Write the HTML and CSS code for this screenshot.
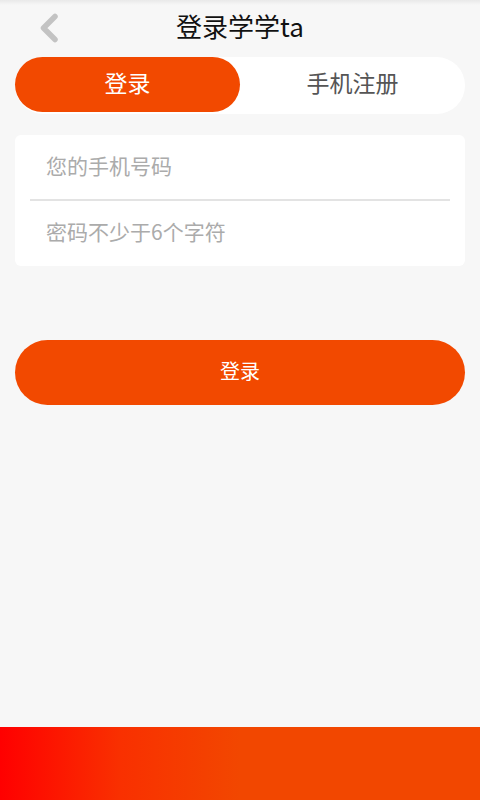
FILE: index.html
```html
<!DOCTYPE html>
<html lang="zh-CN">
<head>
<meta charset="utf-8">
<title>登录学学ta</title>
<link rel="stylesheet" href="styles.css">
</head>
<body>
<div class="page">
  <header class="header">
    <span class="back">
      <svg width="24" height="32" viewBox="0 0 24 32"><path d="M18 4.5 L6.5 16 L18 27.5" fill="none" stroke="#c3c3c3" stroke-width="5.5" stroke-linecap="round" stroke-linejoin="round"/></svg>
    </span>
    <h1 class="title">登录学学ta</h1>
  </header>
  <nav class="tabs">
    <div class="tab active">登录</div>
    <div class="tab">手机注册</div>
  </nav>
  <form class="card">
    <div class="row"><input class="field" type="tel" placeholder="您的手机号码"></div>
    <div class="divider"></div>
    <div class="row"><input class="field" type="password" placeholder="密码不少于6个字符"></div>
  </form>
  <button class="submit" type="button">登录</button>
  <footer class="bottom"></footer>
</div>
</body>
</html>
```

FILE: styles.css
```css
html, body {
  margin: 0;
  padding: 0;
}
body {
  background: #f7f7f7;
  font-family: "Noto Sans CJK SC", "Noto Sans", sans-serif;
}
.page {
  height: 800px;
  display: flex;
  flex-direction: column;
  background: linear-gradient(#e9e9e9, #f7f7f7 5px, #f7f7f7);
}
.header {
  height: 57px;
  display: flex;
  align-items: center;
  justify-content: center;
  position: relative;
}
.back {
  position: absolute;
  left: 37px;
  top: 12px;
  display: flex;
}
.title {
  margin: 0;
  font-size: 26px;
  font-weight: normal;
  color: #111;
  line-height: 1;
  padding-bottom: 5px;
}
.tabs {
  margin: 0 15px;
  height: 57px;
  background: #fff;
  border-radius: 29px;
  display: flex;
}
.tab {
  flex: 1;
  display: flex;
  align-items: center;
  justify-content: center;
  font-size: 23px;
  color: #555;
  height: 55px;
  padding-bottom: 5px;
  box-sizing: border-box;
}
.tab.active {
  flex: 0 0 225px;
  background: #f24900;
  color: #fff;
  border-radius: 28px;
}
.card {
  margin: 21px 15px 0;
  background: #fff;
  border-radius: 6px;
  display: flex;
  flex-direction: column;
}
.row {
  height: 64px;
  display: flex;
  align-items: center;
  padding: 0 31px 5px;
  box-sizing: border-box;
}
.row:last-child {
  height: 65px;
}
.divider {
  height: 2px;
  margin: 0 15px;
  background: #e3e3e3;
}
.field {
  border: 0;
  outline: 0;
  background: transparent;
  font-family: inherit;
  font-size: 21px;
  padding: 0;
  width: 100%;
  color: #333;
}
.field::placeholder {
  color: #ababab;
}
.submit {
  margin: 74px 15px 0;
  height: 65px;
  border: 0;
  border-radius: 33px;
  background: #f24900;
  color: #fff;
  font-family: inherit;
  font-size: 20px;
  padding: 0 0 5px;
}
.bottom {
  margin-top: auto;
  height: 73px;
  background: linear-gradient(90deg, #ff0000 0%, #f93000 25%, #f24700 50%, #f24700 100%);
}
```
